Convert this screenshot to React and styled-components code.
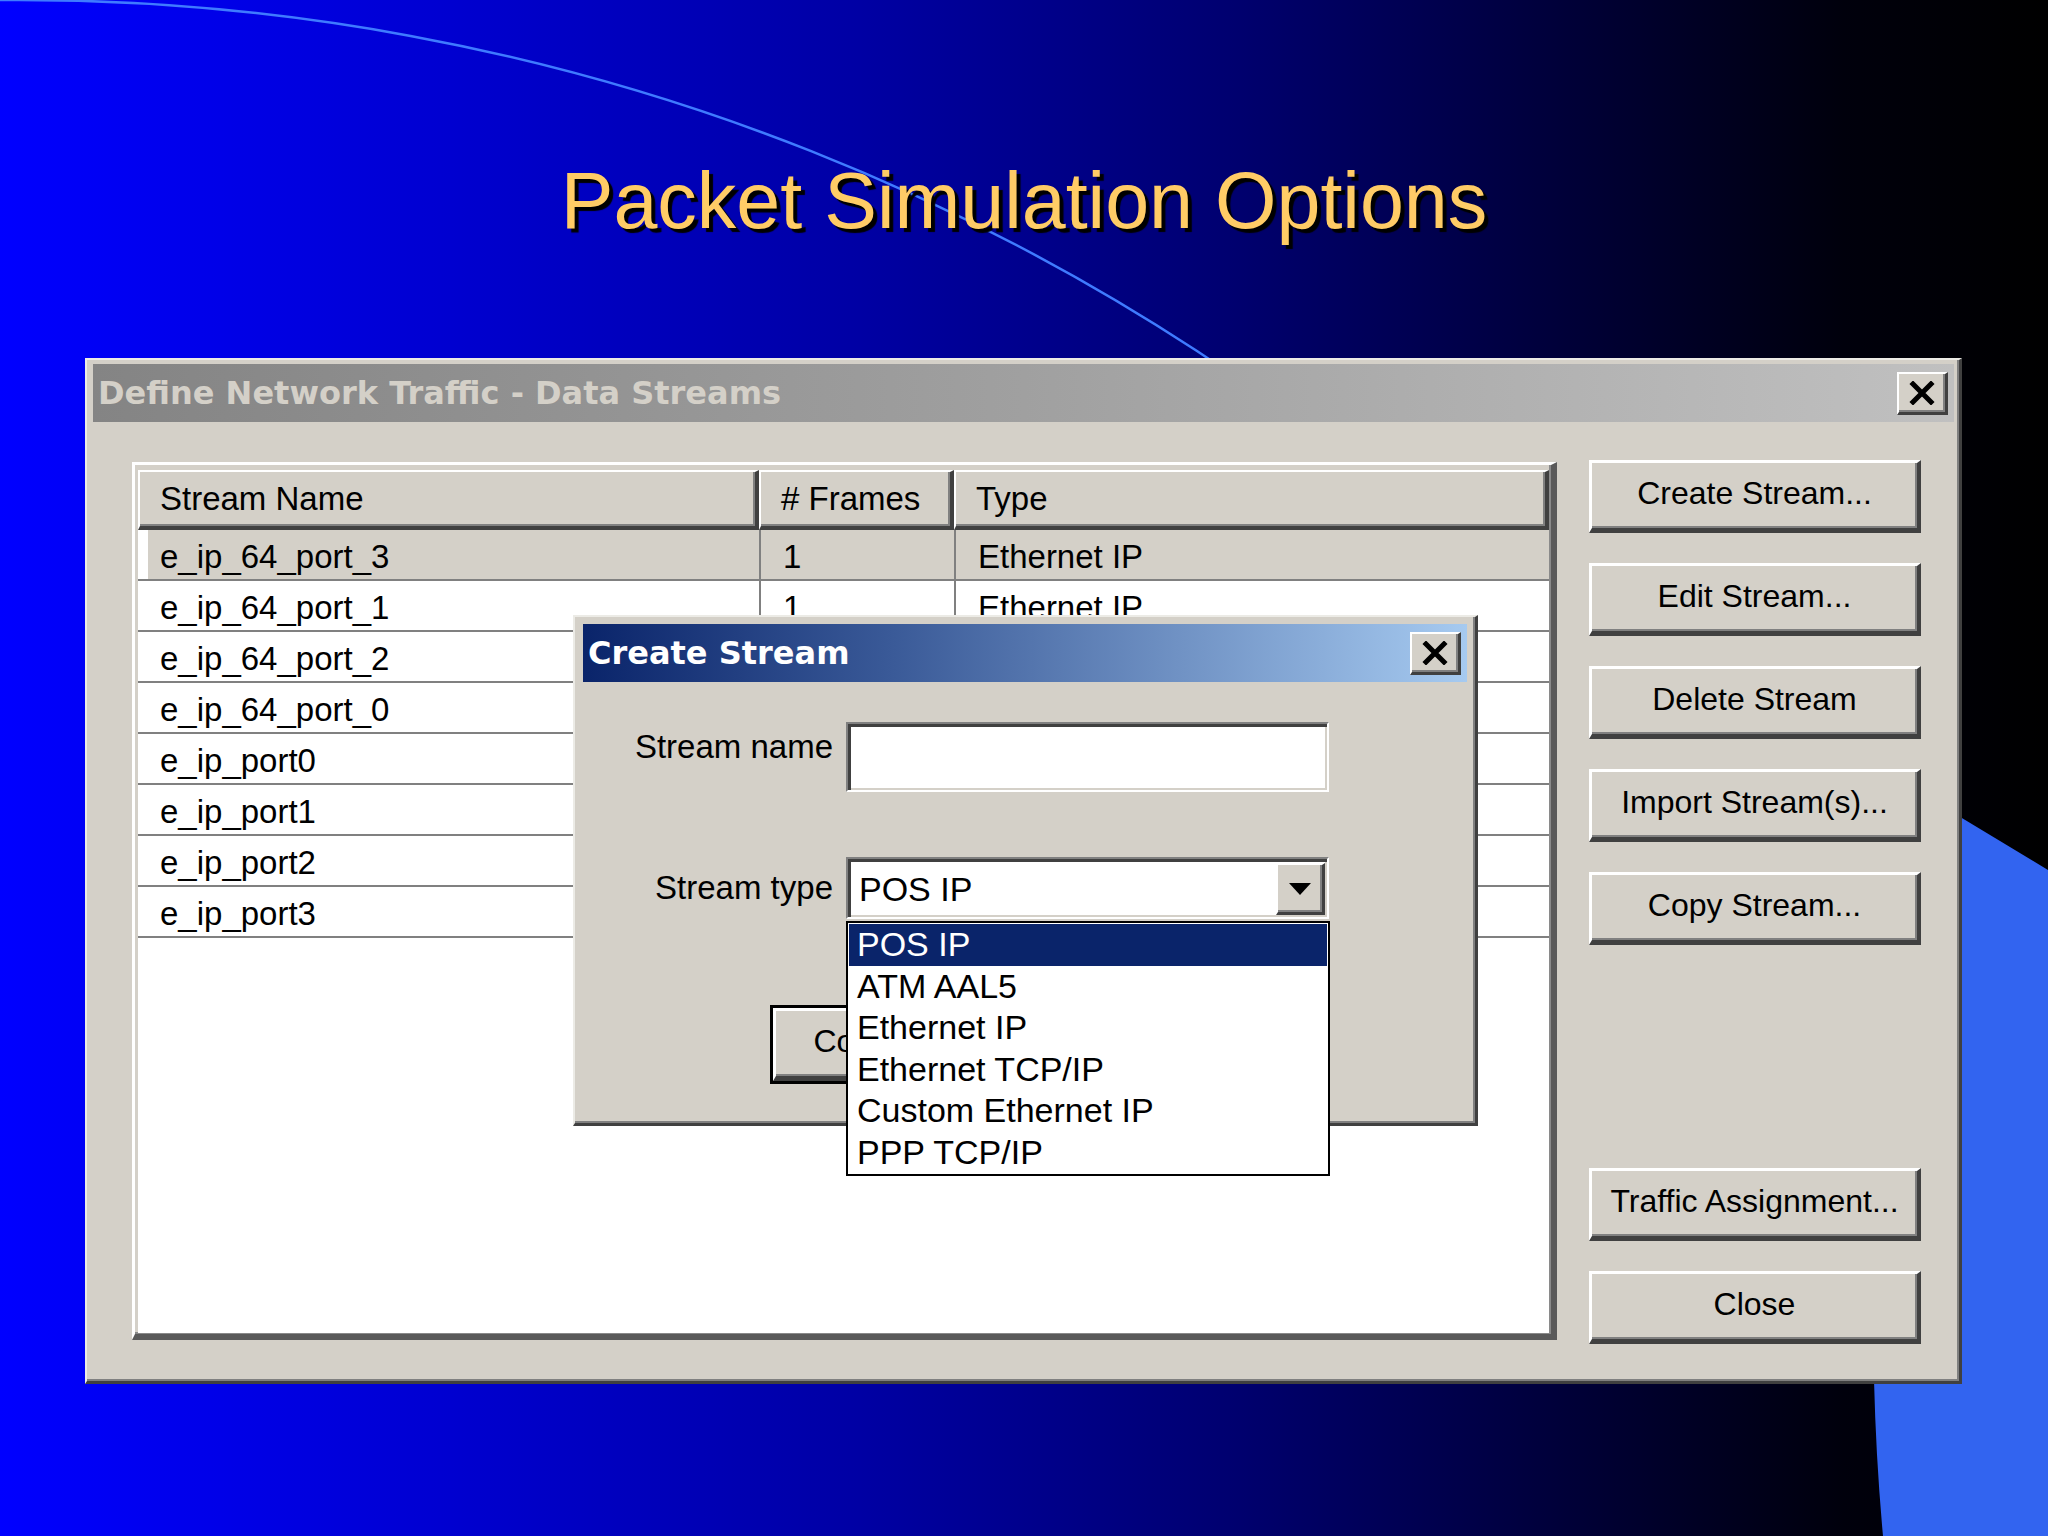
import React from 'react';
import styled, { createGlobalStyle, css } from 'styled-components';

const streams = [
  { name: 'e_ip_64_port_3', frames: 1, type: 'Ethernet IP', selected: true },
  { name: 'e_ip_64_port_1', frames: 1, type: 'Ethernet IP' },
  { name: 'e_ip_64_port_2', frames: 1, type: 'Ethernet IP' },
  { name: 'e_ip_64_port_0', frames: 1, type: 'Ethernet IP' },
  { name: 'e_ip_port0', frames: 1, type: 'Ethernet IP' },
  { name: 'e_ip_port1', frames: 1, type: 'Ethernet IP' },
  { name: 'e_ip_port2', frames: 1, type: 'Ethernet IP' },
  { name: 'e_ip_port3', frames: 1, type: 'Ethernet IP' },
];

const streamTypes = ['POS IP', 'ATM AAL5', 'Ethernet IP', 'Ethernet TCP/IP', 'Custom Ethernet IP', 'PPP TCP/IP'];

const CloseGlyph = () => (
  <svg width="26" height="24" viewBox="0 0 26 24">
    <path d="M4 3 L22 21 M22 3 L4 21" stroke="#000" strokeWidth="5" strokeLinecap="square" />
  </svg>
);

const ArrowGlyph = () => (
  <svg width="22" height="12" viewBox="0 0 22 12">
    <polygon points="0,0 22,0 11,12" fill="#000" />
  </svg>
);

const App = () => {
  return (
    <>
      <GlobalStyle />
      <Slide>
        <Backdrop viewBox="0 0 2048 1536">
          <circle cx="19" cy="2152" r="2152" fill="none" stroke="#3f7bff" strokeWidth="2.5" />
          <path d="M1700 660 L2048 870 L2048 1536 L1883 1536 Q1876 1460 1874 1380 L1860 900 Z" fill="#3264f0" />
        </Backdrop>

        <Title>Packet Simulation Options</Title>

        <Window>
          <TitleBar>
            <TitleText>Define Network Traffic - Data Streams</TitleText>
            <CloseButton><CloseGlyph /></CloseButton>
          </TitleBar>

          <WindowBody>
            <ListFrame>
              <ListView>
                <HeaderRow>
                  <HeaderCell>Stream Name</HeaderCell>
                  <HeaderCell># Frames</HeaderCell>
                  <HeaderCell>Type</HeaderCell>
                </HeaderRow>
                {streams.map((s) => (
                  <DataRow key={s.name} $selected={s.selected}>
                    <Cell>{s.name}</Cell>
                    <Cell $divider>{s.frames}</Cell>
                    <Cell $divider>{s.type}</Cell>
                  </DataRow>
                ))}
              </ListView>
            </ListFrame>

            <ButtonColumn>
              <ButtonGroup>
                <PushButton>Create Stream...</PushButton>
                <PushButton>Edit Stream...</PushButton>
                <PushButton>Delete Stream</PushButton>
                <PushButton>Import Stream(s)...</PushButton>
                <PushButton>Copy Stream...</PushButton>
              </ButtonGroup>
              <ButtonGroup>
                <PushButton>Traffic Assignment...</PushButton>
                <PushButton>Close</PushButton>
              </ButtonGroup>
            </ButtonColumn>
          </WindowBody>
        </Window>

        <Dialog>
          <TitleBar $active>
            <TitleText $active>Create Stream</TitleText>
            <CloseButton><CloseGlyph /></CloseButton>
          </TitleBar>

          <DialogBody>
            <FieldLabel $raise>Stream name</FieldLabel>
            <TextField />

            <FieldLabel>Stream type</FieldLabel>
            <SelectBox>
              <SelectValue>POS IP</SelectValue>
              <ArrowButton><ArrowGlyph /></ArrowButton>
              <DropList>
                {streamTypes.map((t, i) => (
                  <DropItem key={t} $active={i === 0}>{t}</DropItem>
                ))}
              </DropList>
            </SelectBox>

            <DialogActions>
              <DialogButton $default>Continue</DialogButton>
              <DialogButton>Cancel</DialogButton>
            </DialogActions>
          </DialogBody>
        </Dialog>
      </Slide>
    </>
  );
};

export default App;

// Styled-components styles

const GlobalStyle = createGlobalStyle`
  html, body {
    margin: 0;
    padding: 0;
    background: #000;
  }
  body {
    font-family: "Liberation Sans", Arial, sans-serif;
  }
`;

const raised = css`
  border-style: solid;
  border-width: 2px 3px 3px 2px;
  border-color: #ffffff #404040 #404040 #ffffff;
  box-shadow: inset -2px -2px 0 #808080;
`;

const Slide = styled.div`
  position: relative;
  width: 2048px;
  height: 1536px;
  overflow: hidden;
  display: flex;
  flex-direction: column;
  background: linear-gradient(90deg, #0000ff 0%, #0000d0 22%, #0000a4 42%, #000070 60%, #00003a 76%, #00000c 90%, #000000 100%);
`;

const Backdrop = styled.svg`
  position: absolute;
  left: 0;
  top: 0;
  width: 2048px;
  height: 1536px;
  z-index: 0;
`;

const Title = styled.h1`
  position: relative;
  z-index: 1;
  margin: 161px 0 0;
  height: 79px;
  font: 400 79px/79px "Liberation Sans", Arial, sans-serif;
  color: #ffcc66;
  text-align: center;
  text-shadow: 4px 4px 1px #000;
`;

const Window = styled.div`
  position: relative;
  z-index: 1;
  box-sizing: border-box;
  margin: 118px 0 0 85px;
  width: 1877px;
  height: 1026px;
  padding: 4px 5px 0 6px;
  display: flex;
  flex-direction: column;
  background: #d4d0c8;
  border-style: solid;
  border-width: 2px 3px 3px 2px;
  border-color: #ecebe6 #404040 #404040 #ecebe6;
  box-shadow: inset -2px -2px 0 #808080;
`;

const TitleBar = styled.div`
  flex: none;
  height: 58px;
  display: flex;
  align-items: center;
  justify-content: space-between;
  padding: 0 6px 0 5px;
  background: ${(p) =>
    p.$active
      ? 'linear-gradient(90deg, #0a246a 0%, #3a5a98 35%, #a6caf0 100%)'
      : 'linear-gradient(90deg, #848484 0%, #a0a0a0 50%, #c0c0c0 100%)'};
`;

const TitleText = styled.span`
  font: 700 32px/58px "DejaVu Sans", Verdana, sans-serif;
  color: ${(p) => (p.$active ? '#ffffff' : '#d4d0c8')};
  white-space: nowrap;
`;

const CloseButton = styled.div`
  box-sizing: border-box;
  width: 51px;
  height: 43px;
  display: flex;
  align-items: center;
  justify-content: center;
  background: #d4d0c8;
  ${raised}
`;

const WindowBody = styled.div`
  flex: 1;
  display: flex;
  gap: 32px;
  padding: 40px 0 0 39px;
`;

const ListFrame = styled.div`
  box-sizing: border-box;
  width: 1425px;
  height: 878px;
  display: flex;
  padding: 5px 2px 1px 3px;
  background: #d4d0c8;
  border-style: solid;
  border-width: 3px 6px 6px 3px;
  border-color: #ffffff #5a5a5a #5a5a5a #ffffff;
  box-shadow: inset -2px -2px 0 #8a8a8a;
`;

const ListView = styled.div`
  flex: 1;
  display: flex;
  flex-direction: column;
  background: #ffffff;
  overflow: hidden;
`;

const columns = css`
  display: grid;
  grid-template-columns: 621px 195px 1fr;
`;

const HeaderRow = styled.div`
  ${columns}
  flex: none;
  height: 60px;
`;

const HeaderCell = styled.div`
  box-sizing: border-box;
  padding-left: 20px;
  background: #d4d0c8;
  border-style: solid;
  border-width: 2px 4px 4px 2px;
  border-color: #ffffff #404040 #404040 #ffffff;
  box-shadow: inset -2px -2px 0 #808080;
  font-size: 33px;
  line-height: 54px;
  color: #000;
  white-space: nowrap;
`;

const DataRow = styled.div`
  ${columns}
  box-sizing: border-box;
  flex: none;
  height: 51px;
  border-bottom: 2px solid #808080;
  background: ${(p) => (p.$selected ? 'linear-gradient(90deg, #ffffff 10px, #d4d0c8 10px)' : '#ffffff')};
`;

const Cell = styled.div`
  box-sizing: border-box;
  padding: 4px 0 0 22px;
  font-size: 33px;
  line-height: 45px;
  color: #000;
  white-space: nowrap;
  border-left: ${(p) => (p.$divider ? '2px solid #808080' : 'none')};
`;

const ButtonColumn = styled.div`
  width: 332px;
  height: 884px;
  margin-top: -2px;
  display: flex;
  flex-direction: column;
  justify-content: space-between;
`;

const ButtonGroup = styled.div`
  display: flex;
  flex-direction: column;
  gap: 30px;
`;

const PushButton = styled.button`
  box-sizing: border-box;
  width: 100%;
  height: 73px;
  padding: 0 0 4px;
  background: #d4d0c8;
  border-style: solid;
  border-width: 3px 4px 5px 3px;
  border-color: #ffffff #404040 #404040 #ffffff;
  box-shadow: inset -2px -2px 0 #808080;
  font: 400 32px "Liberation Sans", Arial, sans-serif;
  color: #000;
  white-space: nowrap;
`;

const Dialog = styled.div`
  position: absolute;
  z-index: 2;
  left: 573px;
  top: 615px;
  box-sizing: border-box;
  width: 905px;
  height: 511px;
  padding: 7px 8px;
  display: flex;
  flex-direction: column;
  background: #d4d0c8;
  border-style: solid;
  border-width: 2px 3px 3px 2px;
  border-color: #ecebe6 #404040 #404040 #ecebe6;
  box-shadow: inset -2px -2px 0 #808080;
`;

const DialogBody = styled.div`
  display: grid;
  grid-template-columns: 1fr 483px;
  grid-template-rows: 70px 62px auto;
  column-gap: 13px;
  row-gap: 65px;
  padding: 40px 138px 0 0;
`;

const FieldLabel = styled.div`
  align-self: center;
  margin-bottom: ${(p) => (p.$raise ? '20px' : '0')};
  text-align: right;
  font-size: 33px;
  line-height: 40px;
  color: #000;
  white-space: nowrap;
`;

const sunken = css`
  box-sizing: border-box;
  background: #ffffff;
  border-style: solid;
  border-width: 2px;
  border-color: #808080 #ffffff #ffffff #808080;
  box-shadow: inset 3px 3px 0 #404040, inset -2px -2px 0 #d4d0c8;
`;

const TextField = styled.div`
  ${sunken}
`;

const SelectBox = styled.div`
  ${sunken}
  position: relative;
  display: flex;
  align-items: center;
  padding: 4px 2px 2px 3px;
`;

const SelectValue = styled.div`
  flex: 1;
  padding-left: 8px;
  font-size: 34px;
  line-height: 54px;
  color: #000;
`;

const ArrowButton = styled.div`
  box-sizing: border-box;
  width: 49px;
  height: 52px;
  display: flex;
  align-items: center;
  justify-content: center;
  background: #d4d0c8;
  ${raised}
`;

const DropList = styled.div`
  position: absolute;
  left: -2px;
  top: calc(100% + 4px);
  box-sizing: border-box;
  width: 484px;
  padding: 1px;
  background: #ffffff;
  border: 2px solid #000;
`;

const DropItem = styled.div`
  height: 41.5px;
  padding-left: 8px;
  font-size: 34px;
  line-height: 41px;
  white-space: nowrap;
  color: ${(p) => (p.$active ? '#ffffff' : '#000000')};
  background: ${(p) => (p.$active ? '#0a246a' : 'transparent')};
`;

const DialogActions = styled.div`
  grid-column: 1 / -1;
  display: flex;
  gap: 44px;
  margin-top: 24px;
  padding-left: 190px;
`;

const DialogButton = styled.button`
  box-sizing: border-box;
  width: 210px;
  height: 73px;
  padding: 0 0 4px;
  background: #d4d0c8;
  border-style: solid;
  border-width: 3px 4px 5px 3px;
  border-color: #ffffff #404040 #404040 #ffffff;
  box-shadow: inset -2px -2px 0 #808080;
  outline: ${(p) => (p.$default ? '3px solid #000' : 'none')};
  font: 400 32px "Liberation Sans", Arial, sans-serif;
  color: #000;
`;
